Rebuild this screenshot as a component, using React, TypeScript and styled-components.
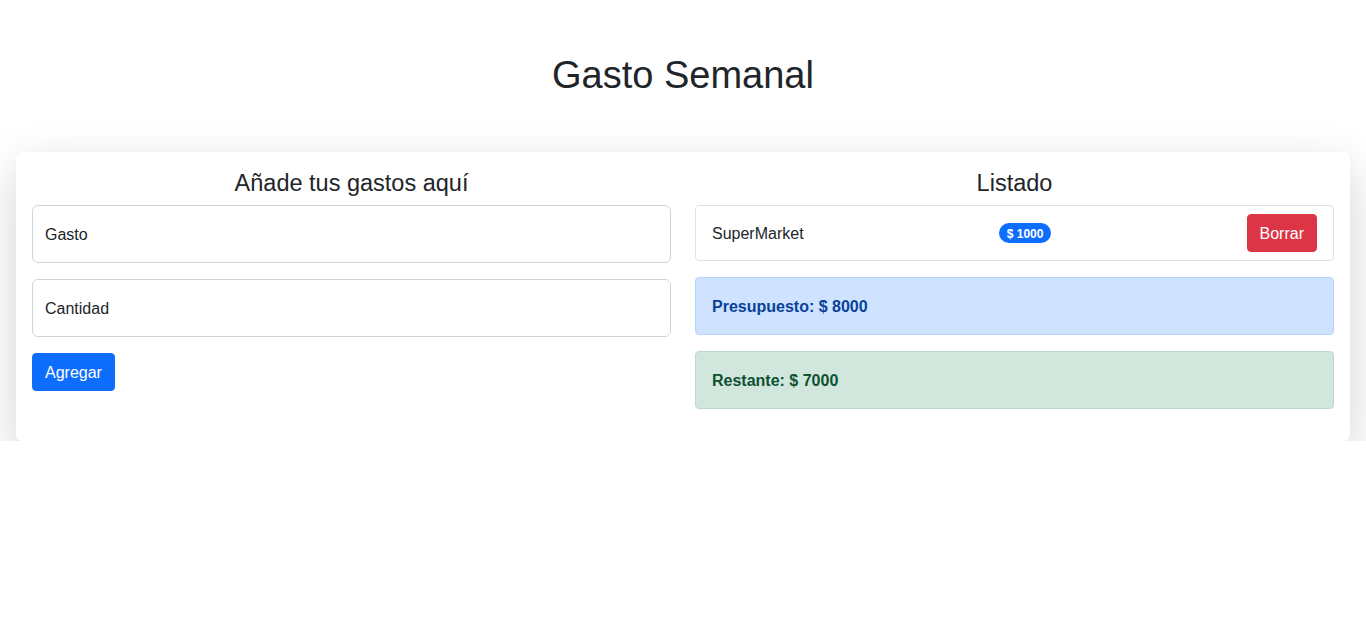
import React from "react";
import styled, { createGlobalStyle } from "styled-components";

const GlobalStyle = createGlobalStyle`
  *, *::before, *::after { box-sizing: border-box; }
  body {
    margin: 0;
    background: #fff;
    color: #212529;
    font-family: "Liberation Sans", Arial, sans-serif;
    font-size: 16px;
    line-height: 1.5;
  }
`;

const Page = styled.div`
  padding: 51px 16px 0;
`;

const Title = styled.h1`
  margin: 0 0 53px;
  text-align: center;
  font-size: 38px;
  font-weight: 400;
  line-height: 48px;
  color: #212529;
`;

const Card = styled.div`
  background: #fff;
  border-radius: 6px;
  box-shadow: 0 16px 48px rgba(0, 0, 0, 0.175);
  padding: 16px;
`;

const Row = styled.div`
  display: grid;
  grid-template-columns: 1fr 1fr;
  column-gap: 24px;
`;

const Column = styled.div`
  display: flex;
  flex-direction: column;
`;

const SectionTitle = styled.h4`
  margin: 0 0 7px;
  padding-top: 1px;
  text-align: center;
  font-size: 23.5px;
  font-weight: 400;
  line-height: 28.8px;
`;

const Field = styled.div`
  height: 58px;
  border: 1px solid #ced4da;
  border-radius: 6px;
  padding: 17px 12px 15px;
  margin-bottom: 16px;
  line-height: 24px;
  color: #212529;
`;

const Button = styled.button<{ $variant: "primary" | "danger" }>`
  align-self: flex-start;
  height: 38px;
  padding: 7px 12px 5px;
  border: 1px solid ${(p) => (p.$variant === "primary" ? "#0d6efd" : "#dc3545")};
  background: ${(p) => (p.$variant === "primary" ? "#0d6efd" : "#dc3545")};
  color: #fff;
  border-radius: 4px;
  font-family: inherit;
  font-size: 16px;
  line-height: 24px;
  cursor: pointer;
`;

const ListItem = styled.div`
  display: flex;
  align-items: center;
  justify-content: space-between;
  border: 1px solid #dee2e6;
  border-radius: 4px;
  padding: 8px 16px;
  margin-bottom: 16px;
`;

const ItemName = styled.span`
  padding-top: 2px;
`;

const Badge = styled.span`
  display: inline-block;
  background: #0d6efd;
  color: #fff;
  border-radius: 50rem;
  padding: 5px 8px 3px;
  font-size: 12px;
  font-weight: 700;
  line-height: 12px;
`;

const Alert = styled.div<{ $tone: "info" | "success" }>`
  padding: 17px 16px 15px;
  margin-bottom: 16px;
  border-radius: 4px;
  border: 1px solid ${(p) => (p.$tone === "info" ? "#b6d4fe" : "#badbcc")};
  background: ${(p) => (p.$tone === "info" ? "#cfe2ff" : "#d1e7dd")};
  color: ${(p) => (p.$tone === "info" ? "#084298" : "#0f5132")};
  font-weight: 700;
  line-height: 24px;
`;

export default function App() {
  return (
    <Page>
      <GlobalStyle />
      <Title>Gasto Semanal</Title>
      <Card>
        <Row>
          <Column>
            <SectionTitle>Añade tus gastos aquí</SectionTitle>
            <Field>Gasto</Field>
            <Field>Cantidad</Field>
            <Button $variant="primary">Agregar</Button>
          </Column>
          <Column>
            <SectionTitle>Listado</SectionTitle>
            <ListItem>
              <ItemName>SuperMarket</ItemName>
              <Badge>$ 1000</Badge>
              <Button $variant="danger">Borrar</Button>
            </ListItem>
            <Alert $tone="info">Presupuesto: $ 8000</Alert>
            <Alert $tone="success">Restante: $ 7000</Alert>
          </Column>
        </Row>
      </Card>
    </Page>
  );
}
